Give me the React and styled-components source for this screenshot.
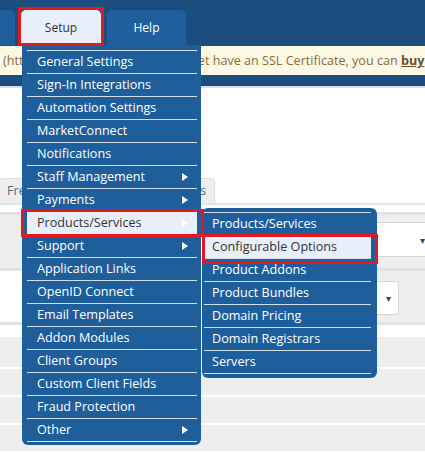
import React from 'react';
import styled, { createGlobalStyle } from 'styled-components';

const GlobalStyle = createGlobalStyle`
  html, body { margin: 0; padding: 0; background: #fff; }
  body {
    font-family: "Open Sans", "Liberation Sans", Arial, sans-serif;
    width: 425px;
    height: 452px;
    overflow: hidden;
  }
`;

const setupItems = [
    { label: 'General Settings' },
    { label: 'Sign-In Integrations' },
    { label: 'Automation Settings' },
    { label: 'MarketConnect' },
    { label: 'Notifications' },
    { label: 'Staff Management', sub: true },
    { label: 'Payments', sub: true },
    { label: 'Products/Services', sub: true, active: true },
    { label: 'Support', sub: true },
    { label: 'Application Links' },
    { label: 'OpenID Connect' },
    { label: 'Email Templates' },
    { label: 'Addon Modules' },
    { label: 'Client Groups' },
    { label: 'Custom Client Fields' },
    { label: 'Fraud Protection' },
    { label: 'Other', sub: true },
];

const productItems = [
    'Products/Services',
    'Configurable Options',
    'Product Addons',
    'Product Bundles',
    'Domain Pricing',
    'Domain Registrars',
    'Servers',
];

const App = () => {
    return (
        <>
            <GlobalStyle />
            <StHeader>
                <StNavTabs>
                    <StNavTab $w={60} style={{ marginLeft: -45 }} />
                    <StSetupWrap>
                        <StNavTab $w={80} $active>Setup</StNavTab>
                        <StDropdown>
                            <StMenuList>
                                {setupItems.map((item) => (
                                    <StMenuItem key={item.label} $active={item.active}>
                                        {item.label}
                                        {item.sub && <StArrow />}
                                        {item.active && (
                                            <StSubMenu>
                                                <StSubList>
                                                    {productItems.map((p, i) => (
                                                        <StSubItem key={p} $active={i === 1}>{p}</StSubItem>
                                                    ))}
                                                </StSubList>
                                            </StSubMenu>
                                        )}
                                    </StMenuItem>
                                ))}
                            </StMenuList>
                        </StDropdown>
                    </StSetupWrap>
                    <StNavTab $w={79}>Help</StNavTab>
                </StNavTabs>
                <StAlert>
                    (https://whmcs.net/) you do not yet have an SSL Certificate, you can <b>buy</b> one
                </StAlert>
            </StHeader>
            <StDivider />
            <StContent />
            <StTabs>
                <StTab $w={96}>Free Domain</StTab>
                <StTab $w={118}>Renewal Options</StTab>
            </StTabs>
            <StPanel>
                <StFormRow>
                    <StTextField>
                        <StCaret>▾</StCaret>
                    </StTextField>
                </StFormRow>
                <StSplitRow>
                    <StLabelCell />
                    <StFieldCell>
                        <StSelect>
                            <StCaret>▾</StCaret>
                        </StSelect>
                    </StFieldCell>
                </StSplitRow>
                <StGap />
                <StStripe $h={30} />
                <StStripe $h={26} />
                <StStripe $h={26} />
                <StStripe $h={26} />
            </StPanel>
        </>
    );
};

const StHeader = styled.div`
    background-color: #1b4e7f;
    padding-bottom: 11px;
`

const StNavTabs = styled.div`
    display: flex;
    align-items: flex-end;
    gap: 6px;
    height: 45px;
`

const StSetupWrap = styled.div`
    position: relative;
`

const StNavTab = styled.div`
    position: relative;
    width: ${(props) => props.$w}px;
    height: 35px;
    border-radius: 5px 5px 0 0;
    background-color: ${(props) => (props.$active ? '#e8effb' : '#1f5f9d')};
    color: ${(props) => (props.$active ? '#333' : '#fff')};
    font-size: 12px;
    display: flex;
    align-items: center;
    justify-content: center;
    ${(props) => props.$active && `
        &::after {
            content: '';
            position: absolute;
            top: -3px;
            left: -3px;
            right: -3px;
            bottom: -1px;
            border: 3px solid #e5171f;
            z-index: 20;
        }
    `}
`

const StDropdown = styled.div`
    position: absolute;
    top: 100%;
    left: 1px;
    width: 179px;
    box-sizing: border-box;
    padding: 5px 4px 3px 5px;
    background-color: #1e5e9b;
    border-radius: 0 0 6px 6px;
    z-index: 10;
`

const StMenuList = styled.div`
    border-bottom: 1px solid rgba(255, 255, 255, 0.8);
`

const StMenuItem = styled.div`
    position: relative;
    height: 22px;
    line-height: 22px;
    padding-left: 10px;
    border-top: 1px solid rgba(255, 255, 255, 0.8);
    font-size: 12.6px;
    white-space: nowrap;
    color: ${(props) => (props.$active ? '#333' : '#fff')};
    background-color: ${(props) => (props.$active ? '#e8effb' : 'transparent')};
    ${(props) => props.$active && `
        &::after {
            content: '';
            position: absolute;
            top: -3px;
            left: -6px;
            right: -7px;
            bottom: -3px;
            border: 3px solid #e5171f;
            z-index: 2;
        }
    `}
`

const StArrow = styled.span`
    position: absolute;
    right: 9px;
    top: 7px;
    width: 0;
    height: 0;
    border-left: 6px solid #fff;
    border-top: 4px solid transparent;
    border-bottom: 4px solid transparent;
`

const StSubMenu = styled.div`
    position: absolute;
    left: calc(100% + 5px);
    top: -4px;
    width: 175px;
    box-sizing: border-box;
    padding: 4px 6px 4px 2px;
    background-color: #1e5e9b;
    border-radius: 6px;
    z-index: 1;
`

const StSubList = styled.div`
    border-bottom: 1px solid rgba(255, 255, 255, 0.8);
`

const StSubItem = styled.div`
    position: relative;
    height: 22px;
    line-height: 22px;
    padding-left: 8px;
    border-top: 1px solid rgba(255, 255, 255, 0.8);
    font-size: 12.6px;
    white-space: nowrap;
    color: ${(props) => (props.$active ? '#333' : '#fff')};
    background-color: ${(props) => (props.$active ? '#e8effb' : 'transparent')};
    ${(props) => props.$active && `
        &::after {
            content: '';
            position: absolute;
            top: -2px;
            left: -2px;
            right: -7px;
            bottom: -6px;
            border: 3px solid #e5171f;
            z-index: 2;
        }
    `}
`

const StAlert = styled.div`
    margin-top: 1px;
    height: 29px;
    line-height: 29px;
    padding-left: 3px;
    background-color: #fcf8e3;
    color: #8a6d3b;
    font-size: 12.6px;
    white-space: nowrap;
    overflow: hidden;

    b {
        color: #66512c;
        text-decoration: underline;
    }
`

const StDivider = styled.div`
    height: 2px;
    background-color: #d8dde2;
`

const StContent = styled.div`
    height: 90px;
`

const StTabs = styled.div`
    display: flex;
    gap: 2px;
    height: 25px;
    margin-left: -1px;
`

const StTab = styled.div`
    box-sizing: border-box;
    width: ${(props) => props.$w}px;
    height: 25px;
    line-height: 24px;
    padding: 0 8px 0 7px;
    background-color: #eee;
    border: 1px solid #ddd;
    border-bottom: none;
    border-radius: 4px 4px 0 0;
    color: #5a6878;
    font-size: 12.6px;
    white-space: nowrap;
    overflow: hidden;
    display: flex;
    justify-content: ${(props) => (props.$w > 100 ? 'flex-end' : 'flex-start')};
`

const StPanel = styled.div`
    border-top: 2px solid #e0e4e8;
    padding-top: 7px;
`

const StFormRow = styled.div`
    display: flex;
    justify-content: flex-end;
    background-color: #eee;
    border-top: 3px solid #dfe3e7;
    padding: 7px 0 11px;
`

const StTextField = styled.div`
    position: relative;
    width: 280px;
    height: 33px;
    margin-right: -8px;
    background-color: #fff;
    border: 1px solid #d4d4d4;
    border-radius: 4px;
`

const StCaret = styled.span`
    position: absolute;
    right: 7px;
    top: 50%;
    transform: translateY(-50%);
    font-size: 10px;
    color: #444;
    font-family: "DejaVu Sans", sans-serif;
`

const StSplitRow = styled.div`
    display: grid;
    grid-template-columns: 60px 1fr;
    border-top: 3px solid #dfe3e7;
`

const StLabelCell = styled.div`
    background-color: #fff;
`

const StFieldCell = styled.div`
    background-color: #eee;
    padding: 10px 26px 7px 0;
    display: flex;
    justify-content: flex-end;
`

const StSelect = styled.div`
    position: relative;
    width: 300px;
    height: 32px;
    background-color: #fff;
    border: 1px solid #d4d4d4;
    border-radius: 4px;
`

const StGap = styled.div`
    height: 12px;
    border-top: 3px solid #dfe3e7;
`

const StStripe = styled.div`
    height: ${(props) => props.$h}px;
    background-color: #eee;
    border-bottom: 2px solid #fff;
`

export default App;
